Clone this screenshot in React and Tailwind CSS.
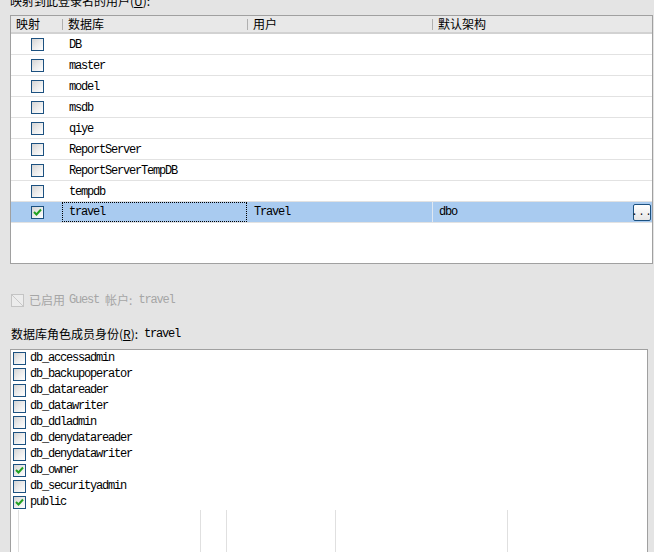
import React from "react";

const mono = { fontFamily: '"Liberation Mono", "DejaVu Sans Mono", monospace' };

function Box({ checked }) {
  return (
    <div className="w-[13px] h-[13px] border border-[#1c5180] bg-gradient-to-br from-[#d4d4d4] via-[#ececec] to-white flex items-center justify-center shrink-0">
      {checked && (
        <svg width="9" height="8" viewBox="0 0 9 8">
          <path d="M1 4 L3.5 6.5 L8 1.5" fill="none" stroke="#21a121" strokeWidth="2" />
        </svg>
      )}
    </div>
  );
}

const dbs = ["DB", "master", "model", "msdb", "qiye", "ReportServer", "ReportServerTempDB", "tempdb"];
const roles = [
  ["db_accessadmin", false],
  ["db_backupoperator", false],
  ["db_datareader", false],
  ["db_datawriter", false],
  ["db_ddladmin", false],
  ["db_denydatareader", false],
  ["db_denydatawriter", false],
  ["db_owner", true],
  ["db_securityadmin", false],
  ["public", true],
];

function Mono({ children, className = "" }) {
  return (
    <span style={mono} className={"text-[12px] tracking-[-1.2px] " + className}>
      {children}
    </span>
  );
}

export default function App() {
  return (
    <div
      className="w-[654px] h-[552px] overflow-hidden bg-[#e4e4e4] text-[12px] text-black flex flex-col"
      style={{ fontFamily: '"Noto Sans CJK SC", "Liberation Sans", sans-serif' }}
    >
      <div className="pl-[10px] h-[15px] leading-[12px] -mt-[5px] mb-[5px] whitespace-nowrap">
        映射到此登录名的用户(<span className="underline">U</span>):
      </div>

      {/* top grid */}
      <div className="ml-[10px] w-[643px] h-[249px] border border-[#a0a0a0] bg-white flex flex-col shrink-0">
        <div className="h-[18px] bg-[#e8e8e8] border-b-2 border-[#d2d2d2] flex items-center leading-[16px] shrink-0">
          <div className="w-[51px] pl-[5px]">映射</div>
          <div className="w-[185px] border-l border-[#b0b0b0] pl-[5px] h-[11px] flex items-center">数据库</div>
          <div className="w-[185px] border-l border-[#b0b0b0] pl-[5px] h-[11px] flex items-center">用户</div>
          <div className="flex-1 border-l border-[#b0b0b0] pl-[5px] h-[11px] flex items-center">默认架构</div>
        </div>
        {dbs.map((d) => (
          <div key={d} className="h-[21px] border-b border-[#e2e2e2] flex items-center shrink-0">
            <div className="w-[51px] flex justify-center pl-[1px]">
              <Box />
            </div>
            <div className="pl-[7px]">
              <Mono>{d}</Mono>
            </div>
          </div>
        ))}
        <div className="h-[21px] bg-[#a9cbf0] border-b border-[#e2e2e2] flex items-stretch shrink-0">
          <div className="w-[51px] flex justify-center items-center pl-[1px]">
            <Box checked />
          </div>
          <div className="w-[185px] border border-dotted border-black pl-[6px] flex items-center">
            <Mono>travel</Mono>
          </div>
          <div className="w-[185px] pl-[7px] flex items-center">
            <Mono>Travel</Mono>
          </div>
          <div className="flex-1 border-l border-[#dfe8f2] pl-[6px] flex items-center justify-between pr-[1px]">
            <Mono>dbo</Mono>
            <div className="w-[18px] h-[17px] rounded-[2px] border border-[#1c5180] bg-gradient-to-b from-white to-[#e6e6e6] flex items-end justify-center pb-[2px] leading-none">
              <span className="text-[10px] tracking-[1px] leading-none" style={mono}>...</span>
            </div>
          </div>
        </div>
      </div>

      {/* guest */}
      <div className="mt-[29px] pl-[11px] flex items-center h-[14px] text-[#a6a6a6] whitespace-nowrap">
        <div className="w-[13px] h-[13px] border border-[#c4c4c4] bg-[#ececec] shrink-0">
          <svg width="11" height="11" viewBox="0 0 11 11">
            <path d="M0 0 L11 11" stroke="#c8c8c8" strokeWidth="1" />
          </svg>
        </div>
        <span className="ml-[5px]">已启用</span>
        <Mono className="ml-[4px]">Guest</Mono>
        <span className="ml-[6px]">帐户:</span>
        <Mono className="ml-[6px]">travel</Mono>
      </div>

      <div className="mt-[20px] pl-[11px] h-[14px] flex items-center whitespace-nowrap">
        <span>数据库角色成员身份(<span className="underline">R</span>):</span>
        <Mono className="ml-[6px]">travel</Mono>
      </div>

      {/* roles list */}
      <div className="mt-[8px] ml-[10px] w-[638px] flex-1 border border-[#a0a0a0] border-b-0 bg-white relative pl-[2px]">
        {roles.map(([r, c]) => (
          <div key={r} className="h-[16px] flex items-center">
            <Box checked={c} />
            <Mono className="ml-[4px]">{r}</Mono>
          </div>
        ))}
        <div className="absolute left-[7px] top-[160px] bottom-0 border-l border-[#e0e0e0]" />
        <div className="absolute left-[189px] top-[160px] bottom-0 border-l border-[#e0e0e0]" />
        <div className="absolute left-[215px] top-[160px] bottom-0 border-l border-[#e0e0e0]" />
        <div className="absolute left-[324px] top-[160px] bottom-0 border-l border-[#e0e0e0]" />
        <div className="absolute left-[496px] top-[160px] bottom-0 border-l border-[#e0e0e0]" />
      </div>
    </div>
  );
}
